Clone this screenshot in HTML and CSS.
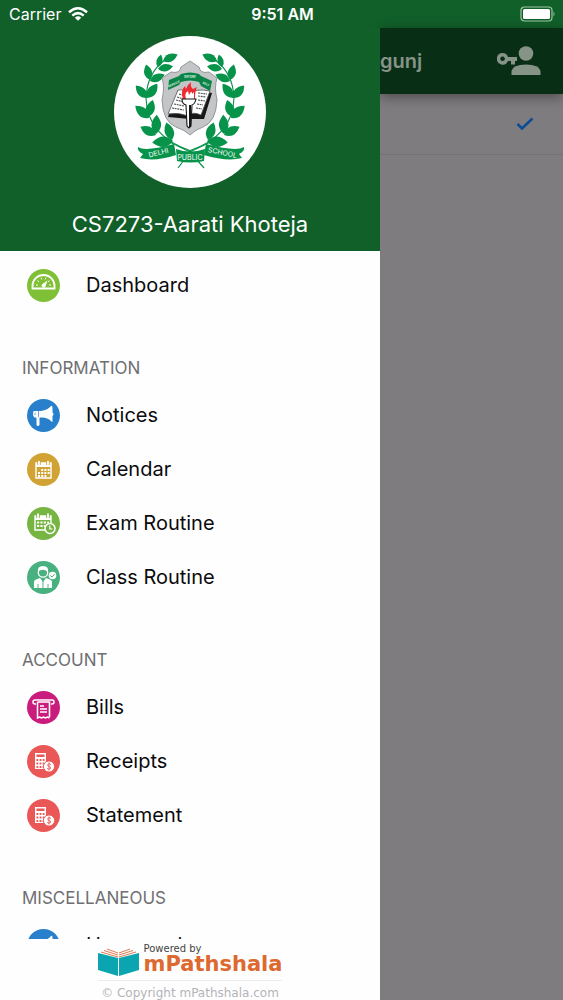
FILE: index.html
```html
<!DOCTYPE html>
<html lang="en">
<head>
    <meta charset="UTF-8">
    <meta name="viewport" content="width=device-width, initial-scale=1.0">
    <title>mPathshala</title>
    <link rel="stylesheet" href="styles.css">
</head>
<body>
    <!-- Status bar -->
    <div class="status-bar">
        <div class="carrier">
            <span>Carrier</span>
            <svg width="20" height="14" viewBox="0 0 20 14" fill="none" stroke="#fff" stroke-width="2.5">
                <path d="M1 5.2Q10 -2.6 19 5.2"/>
                <path d="M4.3 8.6Q10 3.6 15.7 8.6"/>
                <path d="M10 13.8L6.8 10.7Q10 8 13.2 10.7Z" fill="#fff" stroke="none"/>
            </svg>
        </div>
        <div class="clock">9:51 AM</div>
        <svg class="battery" width="36" height="16" viewBox="0 0 36 16">
            <rect x="1" y="1" width="31" height="14" rx="3.5" fill="none" stroke="#9fc5a5" stroke-width="1.2"/>
            <rect x="3" y="3" width="27" height="10" rx="1.5" fill="#fff"/>
            <path d="M33.5 5.5Q35.5 8 33.5 10.5Z" fill="#9fc5a5"/>
        </svg>
    </div>

    <div class="app">
        <!-- Side menu -->
        <aside class="drawer">
            <header class="profile">
                <svg class="crest" viewBox="5 6 152 152">
                    <defs>
                        <path id="leaf" d="M0 0Q-8 -7 0 -16Q8 -7 0 0Z"/>
                    </defs>
                    <circle cx="81" cy="82" r="76" fill="#fff"/>
                    <g id="laurel" fill="#07934a">
                        <path d="M56 30Q38 43 37 68Q38 106 82 121" fill="none" stroke="#07934a" stroke-width="1.1"/>
                        <use href="#leaf" transform="translate(54 31) rotate(66)"/>
                        <use href="#leaf" transform="translate(49 37) rotate(14) scale(.8)"/>
                        <use href="#leaf" transform="translate(49 39) rotate(80) scale(.95)"/>
                        <use href="#leaf" transform="translate(41 50) rotate(-14)"/>
                        <use href="#leaf" transform="translate(41 51) rotate(66)"/>
                        <use href="#leaf" transform="translate(38 68) rotate(-42) scale(1.05)"/>
                        <use href="#leaf" transform="translate(38 68) rotate(36) scale(1.1)"/>
                        <use href="#leaf" transform="translate(40 88) rotate(-48) scale(1.15)"/>
                        <use href="#leaf" transform="translate(39 87) rotate(16) scale(1.1)"/>
                        <use href="#leaf" transform="translate(47 105) rotate(-62) scale(1.1)"/>
                        <use href="#leaf" transform="translate(47 104) rotate(2) scale(1.2)"/>
                        <use href="#leaf" transform="translate(64 111) rotate(-94) scale(1.3)"/>
                        <use href="#leaf" transform="translate(63 110) rotate(-18) scale(1.15)"/>
                    </g>
                    <use href="#laurel" transform="translate(162 0) scale(-1 1)"/>

                    <!-- Shield with motto -->
                    <path d="M81 31L90 37Q91 44 100 42L108 48Q105 57 108 70Q107 92 94 97Q86 100 81 105Q76 100 67 97Q54 92 53 70Q56 57 53 48L62 42Q71 44 72 37Z" fill="#c4c5c7" stroke="#92979a" stroke-width="1"/>
                    <path d="M60 50L70 46L72 44Q81 41 90 44L92 46L103 51L101 61L92 56L90 52Q81 49 72 52L70 55L59 60Z" fill="#0a8448"/>
                    <g class="motto-text">
                        <text x="65" y="55" transform="rotate(-24 65 54)">SERVICE</text>
                        <text x="81" y="48">BEFORE</text>
                        <text x="97" y="55" transform="rotate(24 97 54)">SELF</text>
                    </g>

                    <!-- Book and torch -->
                    <path d="M69 60L78 63L82 66L90 60L103 63L95 89H81L59 87Z" fill="#171717"/>
                    <path d="M69 60Q76 59 80 64Q86 58 101 61L92 85Q84 81 79 86Q70 82 59 84Z" fill="#fff" stroke="#555" stroke-width=".8"/>
                    <path d="M70 64L77 66M68 67L75 69M67 70L75 72M65 74L75 76M63 78L75 80M89 63L98 64M89 66L97 67M89 70L96 71M88 74L94 75M87 78L93 79" stroke="#555" stroke-width="1.2" stroke-dasharray="2 .7"/>
                    <path d="M74 69Q71 61 76 56L77 59Q79 54 82 52Q81 57 84 59L88 57Q86 61 86 69Z" fill="#ef2b32"/>
                    <path d="M77 69Q75 63 79 61L80 65Q83 59 83 64L85 62V69Z" fill="#fff"/>
                    <path d="M73 69H87Q86 74 83 75L82 96L80 98L78 96L77 75Q73 74 73 69Z" fill="#fff" stroke="#171717" stroke-width="1.1"/>
                    <path d="M82 75L82 96L80 98L80 75Z" fill="#171717"/>

                    <!-- Name ribbon -->
                    <path d="M78 123Q90 118 107 109M84 123Q72 118 55 109M75 130L69 138M88 130L95 138" fill="none" stroke="#07934a" stroke-width="1.2"/>
                    <path d="M29 117Q36 122 65 114L67 125Q46 132 31 128L34 124Q28 121 29 117Z" fill="#07934a"/>
                    <path d="M135 117Q127 122 97 114L95 125Q118 132 133 128L130 124Q136 121 135 117Z" fill="#07934a"/>
                    <path d="M67 119Q81 124 96 119L95 131Q81 134 68 131Z" fill="#07934a"/>
                    <g class="ribbon-text">
                        <text x="50" y="125" transform="rotate(-14 50 125)">DELHI</text>
                        <text x="81" y="130">PUBLIC</text>
                        <text x="113" y="125" transform="rotate(12 113 125)">SCHOOL</text>
                    </g>
                </svg>
                <div class="student">CS7273-Aarati Khoteja</div>
            </header>

            <nav class="menu">
                <a class="item" href="#dashboard">
                    <svg class="icon" viewBox="0 0 33 33">
                        <circle cx="16.5" cy="16.5" r="16.5" fill="#7fc036"/>
                        <path d="M5.5 19.5V17A11 11 0 0 1 27.5 17V19.5Z" fill="none" stroke="#fff" stroke-width="1.8"/>
                        <path d="M9 16H11M10.5 11.5L12 13M14.2 8.8L14.8 10.4M18.8 8.8L18.2 10.4M22.5 11.5L21 13M24 16H22" stroke="#fff" stroke-width="1"/>
                        <path d="M20.5 11.5L18.5 17.5A2 2 0 1 1 15.5 15Z" fill="#fff"/>
                    </svg>
                    Dashboard
                </a>

                <h2>INFORMATION</h2>
                <a class="item" href="#notices">
                    <svg class="icon" viewBox="0 0 33 33">
                        <circle cx="16.5" cy="16.5" r="16.5" fill="#287fcc"/>
                        <path id="horn" d="M7 12H14Q21 11 24 7Q25.5 6 25.5 9V13.5Q27.5 15 25.5 17V22Q25.5 24 24 22Q20 18 14 18.5H12.5V26Q11 28 9.5 26V18.5H7.5Q6 18 6 15Q6 12 7 12Z" fill="#fff"/>
                        <path d="M11.5 12V18M8 13.5V16" stroke="#287fcc" stroke-width=".7"/>
                    </svg>
                    Notices
                </a>
                <a class="item" href="#calendar">
                    <svg class="icon" viewBox="0 0 33 33">
                        <circle cx="16.5" cy="16.5" r="16.5" fill="#d1a334"/>
                        <path d="M9 10H24V25H9Z" fill="none" stroke="#fff" stroke-width="1.4"/>
                        <path d="M9 10H24V14H9Z" fill="#fff"/>
                        <path d="M12 8V12M21 8V12" stroke="#d1a334" stroke-width="3.5"/>
                        <path d="M12 8V12M21 8V12" stroke="#fff" stroke-width="1.8"/>
                        <path d="M14.2 17H23M11 20H23M11 23H20" stroke="#fff" stroke-width="2" stroke-dasharray="2 1.2"/>
                    </svg>
                    Calendar
                </a>
                <a class="item" href="#exam-routine">
                    <svg class="icon" viewBox="0 0 33 33">
                        <circle cx="16.5" cy="16.5" r="16.5" fill="#77b543"/>
                        <path d="M18 23H8V9H24V16" fill="none" stroke="#fff" stroke-width="1.4"/>
                        <path d="M8 9H24V13H8Z" fill="#fff"/>
                        <path d="M11 6.5V11M21 6.5V11" stroke="#77b543" stroke-width="3.5"/>
                        <path d="M11 6.5V11M21 6.5V11" stroke="#fff" stroke-width="1.8"/>
                        <path d="M10 15.5H22M10 19H18" stroke="#fff" stroke-width="2" stroke-dasharray="2.2 1.2"/>
                        <circle cx="23" cy="21.5" r="5" fill="#77b543" stroke="#fff" stroke-width="1.5"/>
                        <path d="M22.8 18.5V22H25.5" fill="none" stroke="#fff" stroke-width="1.2"/>
                    </svg>
                    Exam Routine
                </a>
                <a class="item" href="#class-routine">
                    <svg class="icon" viewBox="0 0 33 33">
                        <circle cx="16.5" cy="16.5" r="16.5" fill="#49b17f"/>
                        <path d="M7 27V21Q7 19 9 18.5L13 17L16 21L19 17L23 18.5Q25 19 25 21V27Z" fill="#fff"/>
                        <path d="M16 20V27M11 23V27M21 23V27" stroke="#49b17f" stroke-width=".9"/>
                        <circle cx="16" cy="11.5" r="4.7" fill="#49b17f" stroke="#fff" stroke-width="1.3"/>
                        <path d="M11 11Q10 5 16 5Q22 5 21 11Q17 8 15 9Q12 9 11 11Z" fill="#fff"/>
                        <circle cx="25.5" cy="14.5" r="3.8" fill="#fff"/>
                        <path d="M23.5 14.5L25 16L27.7 13" fill="none" stroke="#49b17f" stroke-width="1"/>
                    </svg>
                    Class Routine
                </a>

                <h2>ACCOUNT</h2>
                <a class="item" href="#bills">
                    <svg class="icon" viewBox="0 0 33 33">
                        <circle cx="16.5" cy="16.5" r="16.5" fill="#ca1c7c"/>
                        <path d="M9 13H8Q6 13 6 11Q6 9 8 9H25Q27 9 27 11Q27 13 25 13H24" fill="none" stroke="#fff" stroke-width="1.5"/>
                        <path d="M10.5 11H22.5V26" fill="none" stroke="#fff" stroke-width="1.6"/>
                        <path d="M10.5 11V27L12.5 26L14.5 27L16.5 26L18.5 27L20.5 26L22.5 27" fill="none" stroke="#fff" stroke-width="1.5"/>
                        <path d="M13 15H17M13 18H20M13 21H20" stroke="#fff" stroke-width="1.4"/>
                    </svg>
                    Bills
                </a>
                <a class="item" href="#receipts">
                    <svg class="icon" viewBox="0 0 33 33">
                        <g id="calculator">
                            <circle cx="16.5" cy="16.5" r="16.5" fill="#e95756"/>
                            <path d="M8 8H19V24H8Z" fill="#fff"/>
                            <path d="M9.5 9.5H17.5V12H9.5Z" fill="#e95756"/>
                            <path d="M9.5 15H18M9.5 18.5H18M9.5 22H18" stroke="#e95756" stroke-width="1.8" stroke-dasharray="1.8 1.3"/>
                            <circle cx="22" cy="21.5" r="5.6" fill="#fff" stroke="#e95756" stroke-width="1"/>
                            <path d="M24 19.5Q22 17.8 20.7 19.5Q20.5 21 22 21.5Q24 22 23.5 23.5Q22 25 20 23.5M22 17.5V25.5" fill="none" stroke="#e95756" stroke-width=".9"/>
                        </g>
                    </svg>
                    Receipts
                </a>
                <a class="item" href="#statement">
                    <svg class="icon" viewBox="0 0 33 33"><use href="#calculator"/></svg>
                    Statement
                </a>

                <h2>MISCELLANEOUS</h2>
                <a class="item" href="#homework">
                    <svg class="icon" viewBox="0 0 33 33">
                        <circle cx="16.5" cy="16.5" r="16.5" fill="#287fcc"/>
                        <use href="#horn"/>
                    </svg>
                    Homework
                </a>
            </nav>

            <footer class="credits">
                <div class="brand">
                    <svg class="book" width="41" height="28" viewBox="0 0 41 28">
                        <path d="M0 5L20 10V28L0 22ZM41 5L21 10V28L41 22Z" fill="#0aa5b1"/>
                        <path d="M3 4L20 9M6 2.5L20 7M9 1L20 5M38 4L21 9M35 2.5L21 7M32 1L21 5" fill="none" stroke="#e07a50" stroke-width="1"/>
                    </svg>
                    <div>
                        <div class="powered">Powered by</div>
                        <div class="brand-name">mPathshala</div>
                    </div>
                </div>
                <div class="copyright">© Copyright mPathshala.com</div>
            </footer>
        </aside>

        <!-- Page behind the menu -->
        <main class="page">
            <header class="toolbar">
                <h1>gunj</h1>
                <button class="account" aria-label="Switch account">
                    <svg width="44" height="30" viewBox="0 0 44 30" fill="#869488">
                        <circle cx="29" cy="7.5" r="7.3"/>
                        <path d="M14.5 29V25Q16 18.5 29 18.5Q42 18.5 43.5 25V29Z"/>
                        <path fill-rule="evenodd" d="M5.5 7A5.8 5.8 0 0 1 11 11H20V15H18V18.5H14V15H11A5.8 5.8 0 1 1 5.5 7ZM5.5 10.5A2.3 2.3 0 1 0 5.6 10.5Z"/>
                    </svg>
                </button>
            </header>
            <div class="selected-row">
                <svg width="18" height="14" viewBox="0 0 18 14">
                    <path d="M1.5 7L6 11.5L16.5 1.5" fill="none" stroke="#0b4c94" stroke-width="2.6"/>
                </svg>
            </div>
        </main>
    </div>
</body>
</html>
```
FILE: styles.css
```css
* {
    box-sizing: border-box;
}

body {
    margin: 0;
    height: 100vh;
    display: flex;
    flex-direction: column;
    font-family: Inter, sans-serif;
    color: #0b0b0d;
    background: #7e7c7f;
    overflow: hidden;
}

/* Status bar */
.status-bar {
    display: grid;
    grid-template-columns: 1fr auto 1fr;
    align-items: center;
    height: 28px;
    padding: 0 7px 0 9px;
    background: #11602a;
    color: #fff;
    font-size: 16px;
}

.carrier {
    display: flex;
    align-items: center;
    gap: 7px;
}

.clock {
    font-weight: 600;
}

.battery {
    justify-self: end;
}

.app {
    flex: 1;
    min-height: 0;
    display: flex;
}

/* Side menu */
.drawer {
    flex: 0 0 67.5%;
    z-index: 1;
    display: flex;
    flex-direction: column;
    background: #fefefe;
}

.profile {
    display: flex;
    flex-direction: column;
    align-items: center;
    padding: 8px 0 11px;
    background: #11602a;
    color: #fff;
}

.crest {
    width: 152px;
    height: 152px;
}

.motto-text {
    font-size: 3px;
    font-weight: 700;
    fill: #d5eadc;
    text-anchor: middle;
}

.ribbon-text {
    font-size: 7px;
    fill: #fff;
    text-anchor: middle;
}

.student {
    margin-top: 21px;
    font-size: 22px;
    line-height: 31px;
}

.menu {
    flex: 1;
    min-height: 0;
    padding-top: 7px;
    overflow: hidden;
}

.item {
    display: flex;
    align-items: center;
    gap: 26px;
    height: 54px;
    padding-left: 27px;
    color: inherit;
    font-size: 20px;
    text-decoration: none;
}

.icon {
    width: 33px;
    height: 33px;
}

.menu h2 {
    margin: 36px 0 0;
    padding-left: 22px;
    color: #6f6f72;
    font-size: 17px;
    font-weight: 400;
    line-height: 40px;
}

/* Credits */
.credits {
    align-self: center;
    height: 61px;
    padding-top: 5px;
    font-family: "DejaVu Sans", sans-serif;
}

.brand {
    display: flex;
    gap: 5px;
    height: 37px;
    border-bottom: 1px solid #ececec;
}

.book {
    margin-top: 4px;
}

.powered {
    font-size: 10px;
    line-height: 10px;
    color: #444;
}

.brand-name {
    font-size: 21px;
    font-weight: 700;
    line-height: 20px;
    color: #dd6930;
}

.copyright {
    padding-top: 5px;
    text-align: center;
    font-size: 12px;
    line-height: 14px;
    color: #b4b4b8;
}

/* Page behind the menu */
.page {
    flex: 1;
    min-width: 0;
}

.toolbar {
    display: flex;
    justify-content: space-between;
    align-items: center;
    height: 66px;
    padding-right: 22px;
    background: #082e16;
    box-shadow: 0 3px 12px rgba(0, 0, 0, 0.4);
}

.toolbar h1 {
    margin: 0;
    color: #869488;
    font-size: 20px;
    font-weight: 600;
}

.account {
    display: flex;
    padding: 0;
    border: none;
    background: none;
    cursor: pointer;
}

.selected-row {
    display: flex;
    justify-content: flex-end;
    align-items: center;
    height: 61px;
    padding-right: 29px;
    border-bottom: 1px solid #747275;
}
```
